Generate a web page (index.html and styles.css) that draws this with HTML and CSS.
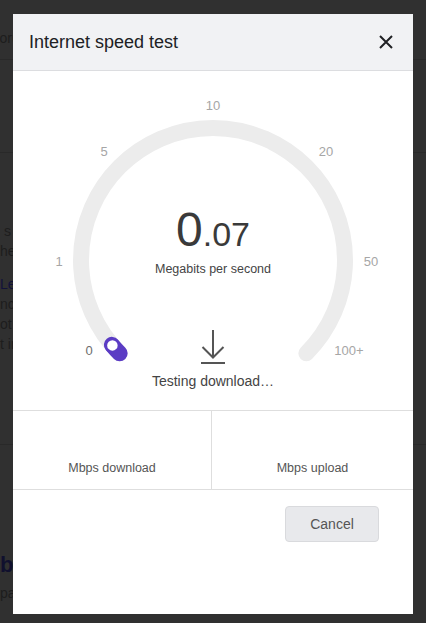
FILE: index.html
```html
<!DOCTYPE html>
<html lang="en">
<head>
<meta charset="utf-8">
<title>Internet speed test</title>
<link rel="stylesheet" href="styles.css">
</head>
<body>
<div class="page">
  <div class="pg-nav"><span class="pg-nav-text">Forum</span></div>
  <div class="pg-band"></div>
  <div class="pg-body">
    <p class="pg-par"><span class="pg-indent">s the test</span><br>he result</p>
    <p class="pg-par"><span class="pg-link">Learn more</span><br>nce the<br>ot sure<br>t in the</p>
  </div>
  <div class="pg-foot">
    <div class="pg-title">back</div>
    <div class="pg-sub">page</div>
  </div>
</div>

<div class="modal" role="dialog" aria-label="Internet speed test">
  <header class="modal-head">
    <h1 class="modal-title">Internet speed test</h1>
    <button class="close" aria-label="Close">
      <svg width="14" height="14" viewBox="0 0 14 14"><path d="M1 1L13 13M13 1L1 13" stroke="#202124" stroke-width="2" fill="none"/></svg>
    </button>
  </header>

  <section class="gauge">
    <svg class="dial" width="400" height="339" viewBox="0 0 400 339">
      <path d="M106.66 282.34 A132 132 0 1 1 293.34 282.34" fill="none" stroke="#ececec" stroke-width="16" stroke-linecap="round"/>
      <path d="M106.66 282.34 A132 132 0 0 1 98.9 273.85" fill="none" stroke="#5b3cc4" stroke-width="16" stroke-linecap="round"/>
      <circle cx="99.4" cy="274.4" r="6.5" fill="#fff" stroke="#5b3cc4" stroke-width="2.5"/>
    </svg>
    <span class="tick tick-0">0</span>
    <span class="tick tick-1">1</span>
    <span class="tick tick-5">5</span>
    <span class="tick tick-10">10</span>
    <span class="tick tick-20">20</span>
    <span class="tick tick-50">50</span>
    <span class="tick tick-100">100+</span>

    <div class="reading"><span class="int">0</span><span class="frac">.07</span></div>
    <div class="unit">Megabits per second</div>
    <svg class="dl-icon" width="24" height="34" viewBox="0 0 24 34">
      <path d="M12 0V28M1.5 17L12 27.5L22.5 17" fill="none" stroke="#555" stroke-width="2"/>
      <path d="M0 33H24" fill="none" stroke="#555" stroke-width="2"/>
    </svg>
    <div class="status">Testing download…</div>
  </section>

  <section class="stats">
    <div class="stat stat-left"><div class="stat-val"></div><div class="stat-label">Mbps download</div></div>
    <div class="stat"><div class="stat-val"></div><div class="stat-label">Mbps upload</div></div>
  </section>

  <footer class="modal-foot">
    <button class="btn">Cancel</button>
  </footer>
</div>
</body>
</html>
```

FILE: styles.css
```css
* { box-sizing: border-box; }

html, body {
  margin: 0;
  padding: 0;
  width: 426px;
  height: 623px;
  overflow: hidden;
}

body {
  background: #303030;
  font-family: "Liberation Sans", Arial, sans-serif;
}

/* darkened page behind the dialog */
.page {
  width: 426px;
  color: #1d1d1d;
  font-size: 14px;
}

.pg-nav {
  height: 60px;
  padding-top: 29px;
  border-bottom: 1px solid #292929;
  line-height: 18px;
  white-space: nowrap;
}

.pg-nav-text {
  display: inline-block;
  margin-left: -9px;
}

.pg-band {
  height: 93px;
  border-bottom: 1px solid #292929;
}

.pg-body {
  height: 292px;
  padding-top: 68px;
  border-bottom: 1px solid #292929;
  white-space: nowrap;
}

.pg-par {
  margin: 0 0 13px 0;
  line-height: 20px;
}

.pg-indent { margin-left: 4px; }

.pg-link { color: #12123a; }

.pg-foot {
  padding-top: 107px;
  white-space: nowrap;
}

.pg-title {
  font-size: 22px;
  font-weight: bold;
  color: #10102e;
  line-height: 26px;
}

.pg-sub {
  margin-top: 6px;
  line-height: 18px;
}

/* dialog */
.modal {
  position: fixed;
  top: 14px;
  left: 13px;
  width: 400px;
  height: 600px;
  background: #fff;
  display: flex;
  flex-direction: column;
  overflow: hidden;
}

.modal-head {
  height: 57px;
  flex: none;
  background: #f1f2f4;
  border-bottom: 1px solid #dcdde0;
  display: flex;
  align-items: center;
  justify-content: space-between;
  padding: 0 20px 1px 16px;
}

.modal-title {
  margin: 0;
  font-size: 18px;
  font-weight: normal;
  line-height: 1;
  color: #202124;
}

.close {
  border: 0;
  background: none;
  padding: 0;
  width: 14px;
  height: 14px;
  display: flex;
}

.gauge {
  position: relative;
  height: 339px;
  flex: none;
  display: flex;
  flex-direction: column;
  align-items: center;
  padding-top: 135px;
}

.dial {
  position: absolute;
  left: 0;
  top: 0;
}

.tick {
  position: absolute;
  font-size: 13px;
  line-height: 16px;
  color: #a6a6a6;
  transform: translate(-50%, -50%);
  white-space: nowrap;
}

.tick-0 { left: 76px; top: 280px; color: #6e6e6e; }
.tick-1 { left: 46px; top: 191px; }
.tick-5 { left: 91px; top: 81px; }
.tick-10 { left: 200px; top: 35px; }
.tick-20 { left: 313px; top: 81px; }
.tick-50 { left: 358px; top: 191px; }
.tick-100 { left: 336px; top: 280px; }

.reading {
  position: relative;
  font-size: 48px;
  line-height: 1;
  height: 48px;
  color: #3a3a3a;
}

.frac { font-size: 34px; }

.unit {
  position: relative;
  margin-top: 7px;
  font-size: 12.5px;
  line-height: 16px;
  color: #444;
}

.dl-icon {
  position: relative;
  display: block;
  margin-top: 53px;
}

.status {
  position: relative;
  margin-top: 8px;
  font-size: 14px;
  line-height: 18px;
  color: #444;
}

.stats {
  flex: none;
  display: grid;
  grid-template-columns: 199px 1fr;
  border-top: 1px solid #dedede;
  border-bottom: 1px solid #dedede;
}

.stat {
  height: 78px;
  display: flex;
  flex-direction: column;
  justify-content: flex-end;
  align-items: center;
  padding-bottom: 13px;
}

.stat-left { border-right: 1px solid #dedede; }

.stat-label {
  font-size: 12.5px;
  line-height: 16px;
  color: #555;
}

.modal-foot {
  flex: 1;
  display: flex;
  justify-content: flex-end;
  align-items: flex-start;
  padding: 16px 34px 0 0;
}

.btn {
  width: 94px;
  height: 36px;
  background: #e8e9ec;
  border: 1px solid #d9dadd;
  border-radius: 4px;
  font-family: "Liberation Sans", Arial, sans-serif;
  font-size: 14px;
  color: #555;
  padding: 0;
}
```
